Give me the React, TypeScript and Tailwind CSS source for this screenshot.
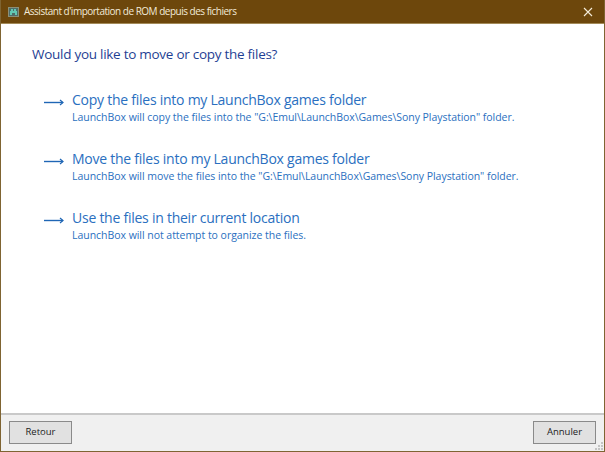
const options = [
  {
    title: "Copy the files into my LaunchBox games folder",
    note: 'LaunchBox will copy the files into the "G:\\Emul\\LaunchBox\\Games\\Sony Playstation" folder.',
  },
  {
    title: "Move the files into my LaunchBox games folder",
    note: 'LaunchBox will move the files into the "G:\\Emul\\LaunchBox\\Games\\Sony Playstation" folder.',
  },
  {
    title: "Use the files in their current location",
    note: "LaunchBox will not attempt to organize the files.",
  },
];

function Arrow() {
  return (
    <svg width="20" height="7" viewBox="0 0 20 7" fill="none" stroke="#1f66b5" className="shrink-0">
      <path d="M0 3.5H19" strokeWidth="1.4" />
      <path d="M16 1L19 3.5L16 6" strokeWidth="1.2" />
    </svg>
  );
}

function AppIcon() {
  return (
    <svg width="11" height="10" viewBox="0 0 11 10" className="shrink-0">
      <rect x="0" y="0" width="11" height="10" fill="#8b8f78" />
      <rect x="1" y="1" width="9" height="8" fill="#4f6d68" />
      <rect x="2" y="4" width="7" height="2" fill="#62c9b4" />
      <rect x="3" y="2" width="2" height="2" fill="#62c9b4" />
      <rect x="6" y="2" width="2" height="2" fill="#62c9b4" />
      <rect x="2" y="6" width="2" height="2" fill="#62c9b4" />
      <rect x="7" y="6" width="2" height="2" fill="#62c9b4" />
    </svg>
  );
}

function SizeGrip() {
  return (
    <svg width="9" height="9" viewBox="0 0 9 9" fill="#c4c4c4" className="absolute bottom-0 right-0">
      <rect x="6" y="0" width="2" height="2" />
      <rect x="3" y="3" width="2" height="2" />
      <rect x="6" y="3" width="2" height="2" />
      <rect x="0" y="6" width="2" height="2" />
      <rect x="3" y="6" width="2" height="2" />
      <rect x="6" y="6" width="2" height="2" />
    </svg>
  );
}

function WizardButton({ label }: { label: string }) {
  return (
    <button className="flex h-[23px] w-[63px] items-center justify-center border border-[#8a8a8a] bg-[#e1e1e1] text-[9.5px] text-[#222]">
      {label}
    </button>
  );
}

export default function App() {
  return (
    <div className="flex h-[452px] w-[605px] flex-col overflow-hidden border-x border-b border-[#7f6432] bg-white font-['Open_Sans','Noto_Sans',sans-serif]">
      <div className="flex h-[24px] shrink-0 items-center gap-[5px] border-b border-[#a38a58] bg-[#6d470c] pl-[7px] pr-[8px] text-[10px] text-[#f2ead8]">
        <AppIcon />
        <span className="flex-1 tracking-[-0.5px]">Assistant d'importation de ROM depuis des fichiers</span>
        <svg width="10" height="10" viewBox="0 0 10 10" stroke="#f5ecd9" strokeWidth="1.1" className="mr-[3px]">
          <path d="M1 1L9 9M9 1L1 9" />
        </svg>
      </div>

      <div className="flex flex-1 flex-col pl-[31px]">
        <h1 className="mt-[21px] text-[13.5px] leading-[18px] tracking-[-0.27px] text-[#1f3f94]">
          Would you like to move or copy the files?
        </h1>
        <div className="mt-[27px] flex flex-col gap-[25px] pl-[12px]">
          {options.map((o) => (
            <div key={o.title} className="flex items-start gap-[8px]">
              <div className="mt-[9px]">
                <Arrow />
              </div>
              <div>
                <div className="text-[14px] leading-[20px] tracking-[-0.25px] text-[#2a6fc0]">{o.title}</div>
                <div className="text-[10.5px] leading-[14px] tracking-[-0.035px] text-[#2a6fc0]">{o.note}</div>
              </div>
            </div>
          ))}
        </div>
      </div>

      <div className="relative flex h-[38px] shrink-0 items-start justify-between border-t-2 border-[#c9c9c9] bg-[#f0f0f0] pl-[8px] pr-[8px] pt-[6px]">
        <WizardButton label="Retour" />
        <WizardButton label="Annuler" />
        <SizeGrip />
      </div>
    </div>
  );
}
